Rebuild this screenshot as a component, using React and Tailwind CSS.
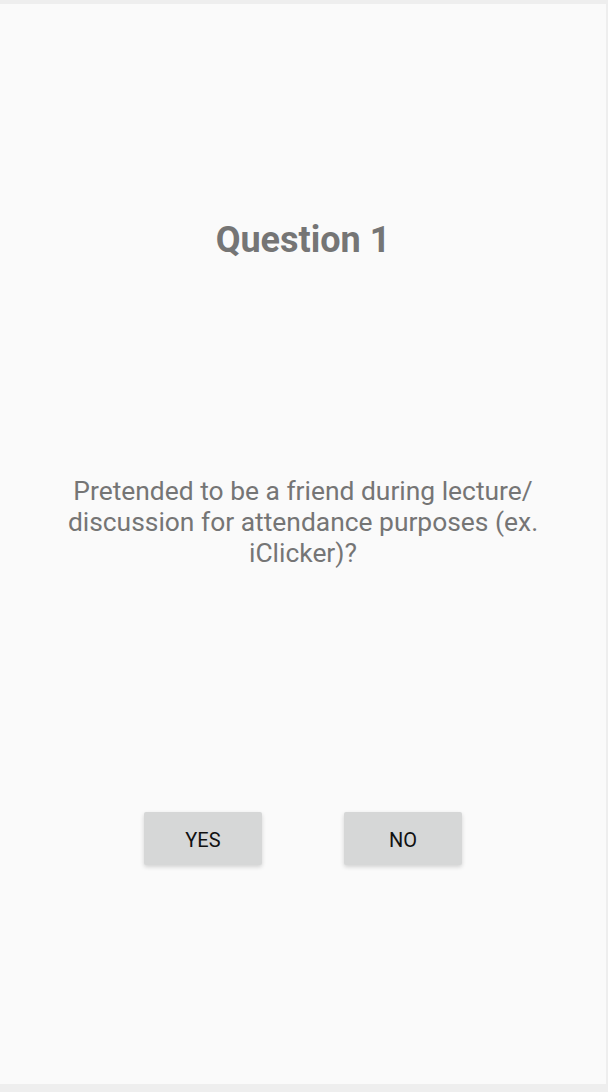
export default function App() {
  return (
    <div className="h-[1092px] w-[608px] bg-[#eeeeee] pt-[4px] pr-[2px] pb-[8px]" style={{ fontFamily: 'Roboto, "Noto Sans", sans-serif' }}>
      <div className="flex h-full flex-col items-center bg-[#fafafa]">
        <h1 className="mt-[215px] text-[36px] font-bold leading-[42px] text-[#757575]">Question 1</h1>

        <p className="mt-[215px] w-[490px] text-center text-[26.4px] leading-[31px] text-[#757575]">
          Pretended to be a friend during lecture/ discussion for attendance purposes (ex. iClicker)?
        </p>

        <div className="mt-[243px] flex gap-[82px]">
          <button className="h-[53px] w-[118px] rounded-[2px] bg-[#d6d7d7] pt-[2px] text-[20px] font-normal text-[#111111] shadow-[0_2px_4px_rgba(0,0,0,0.16)]">
            YES
          </button>
          <button className="h-[53px] w-[118px] rounded-[2px] bg-[#d6d7d7] pt-[2px] text-[20px] font-normal text-[#111111] shadow-[0_2px_4px_rgba(0,0,0,0.16)]">
            NO
          </button>
        </div>
      </div>
    </div>
  )
}
